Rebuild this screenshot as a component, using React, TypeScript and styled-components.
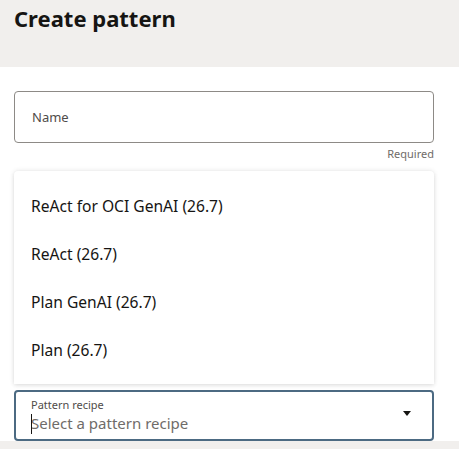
import React from "react";
import styled, { createGlobalStyle } from "styled-components";

const Global = createGlobalStyle`
  html, body { margin: 0; padding: 0; background: #ffffff; }
  body { font-family: "Noto Sans", "Open Sans", sans-serif; color: #161513; }
  * { box-sizing: border-box; }
`;

const Page = styled.div`
  width: 459px;
  height: 449px;
  display: flex;
  flex-direction: column;
  overflow: hidden;
`;

const Header = styled.header`
  height: 67px;
  background: #f1efed;
  padding: 3px 14px 0;
  flex-shrink: 0;
`;

const Title = styled.h1`
  margin: 0;
  font-size: 22px;
  line-height: 30px;
  font-weight: 700;
  color: #161513;
`;

const Body = styled.main`
  flex: 1;
  background: #ffffff;
  padding: 24px 25px 0 14px;
  display: flex;
  flex-direction: column;
`;

const Field = styled.div<{ $focused?: boolean }>`
  position: relative;
  height: ${(p) => (p.$focused ? 51 : 52)}px;
  border: ${(p) => (p.$focused ? "2px solid #4c6a82" : "1px solid #8d8a86")};
  border-radius: 4px;
  display: flex;
  align-items: center;
  padding: 0 ${(p) => (p.$focused ? 15 : 17)}px;
`;

const Placeholder = styled.span`
  font-size: 13px;
  color: #4f4c49;
`;

const Helper = styled.div`
  text-align: right;
  font-size: 11px;
  line-height: 16px;
  color: #6f6c69;
  margin-top: 3px;
`;

const SelectWrap = styled.div`
  position: relative;
  margin-top: 228px;
`;

const TextCol = styled.div`
  flex: 1;
  align-self: stretch;
  display: flex;
  flex-direction: column;
  padding-top: 6px;
`;

const SmallLabel = styled.span`
  font-size: 11px;
  line-height: 13px;
  color: #4f4c49;
  margin-bottom: 3.5px;
`;

const Value = styled.span`
  position: relative;
  font-size: 15px;
  line-height: 17px;
  color: #6f6c69;
  &::before {
    content: "";
    position: absolute;
    left: 0;
    top: -1px;
    width: 1px;
    height: 20px;
    background: #161513;
  }
`;

const Caret = styled.svg`
  width: 8px;
  height: 5px;
  margin-right: 6px;
  margin-top: -4px;
  flex-shrink: 0;
`;

const Menu = styled.ul`
  position: absolute;
  left: 0;
  right: 0;
  bottom: calc(100% + 6px);
  margin: 0;
  padding: 11px 0 10px;
  list-style: none;
  background: #ffffff;
  border-radius: 4px 4px 0 0;
  box-shadow: 0 0 5px rgba(0, 0, 0, 0.12), 0 2px 4px rgba(0, 0, 0, 0.06);
`;

const Item = styled.li`
  height: 48px;
  display: flex;
  align-items: center;
  padding-left: 17px;
  font-size: 15.6px;
  color: #161513;
`;

const Footer = styled.footer`
  height: 8px;
  background: #f1efed;
  flex-shrink: 0;
`;

const items = [
  "ReAct for OCI GenAI (26.7)",
  "ReAct (26.7)",
  "Plan GenAI (26.7)",
  "Plan (26.7)",
];

export default function App() {
  return (
    <Page>
      <Global />
      <Header>
        <Title>Create pattern</Title>
      </Header>
      <Body>
        <Field>
          <Placeholder>Name</Placeholder>
        </Field>
        <Helper>Required</Helper>
        <SelectWrap>
          <Menu>
            {items.map((t) => (
              <Item key={t}>{t}</Item>
            ))}
          </Menu>
          <Field $focused>
            <TextCol>
              <SmallLabel>Pattern recipe</SmallLabel>
              <Value>Select a pattern recipe</Value>
            </TextCol>
            <Caret viewBox="0 0 8 5">
              <path d="M0 0 H8 L4 5 Z" fill="#161513" />
            </Caret>
          </Field>
        </SelectWrap>
      </Body>
      <Footer />
    </Page>
  );
}
